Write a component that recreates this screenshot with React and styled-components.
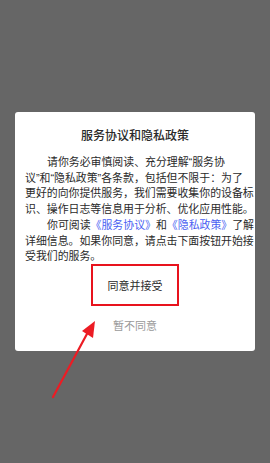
import styled, { createGlobalStyle } from "styled-components";

const GlobalStyle = createGlobalStyle`
    html, body {
        margin: 0;
        padding: 0;
        background: #666666;
    }
    body {
        font-family: "Liberation Sans", "Noto Sans CJK SC", sans-serif;
    }
`;

const Screen = styled.div`
    position: relative;
    width: 270px;
    height: 463px;
    background-color: #666666;
    display: flex;
    align-items: center;
    justify-content: center;
    overflow: hidden;
`;

const Dialog = styled.div`
    width: 240px;
    background-color: #ffffff;
    border-radius: 3px;
    padding: 16px 10px 17px;
    box-sizing: border-box;
    display: flex;
    flex-direction: column;
    align-items: center;
`;

const Title = styled.h1`
    margin: 0;
    font-size: 12px;
    line-height: 16px;
    font-weight: 500;
    color: #2a2a2a;
`;

const Body = styled.div`
    width: 100%;
    margin-top: 11px;
    font-size: 10.9px;
    line-height: 15.7px;
    color: #2a2a2a;
`;

const Para = styled.p`
    margin: 0;
    text-indent: 22px;
    white-space: nowrap;
`;

const Link = styled.span`
    color: #4a5ff2;
`;

const Highlight = styled.div`
    margin-top: -1px;
    border: 2px solid #e8131d;
    box-sizing: border-box;
    width: 88px;
    height: 42px;
    display: flex;
    align-items: center;
    justify-content: center;
`;

const AgreeButton = styled.button`
    border: none;
    background: none;
    padding: 2px 0 0;
    font-family: inherit;
    font-size: 11px;
    line-height: 16px;
    color: #2a2a2a;
`;

const RejectButton = styled.button`
    margin-top: 12px;
    border: none;
    background: none;
    padding: 0;
    font-family: inherit;
    font-size: 11px;
    line-height: 16px;
    color: #9a9a9a;
`;

const Arrow = styled.svg`
    position: absolute;
    left: 0;
    top: 0;
    pointer-events: none;
`;

export default function App() {
    return (
        <>
            <GlobalStyle />
            <Screen>
                <Dialog>
                    <Title>服务协议和隐私政策</Title>
                    <Body>
                        <Para>
                            请你务必审慎阅读、充分理解“服务协<br />
                            议”和“隐私政策”各条款，包括但不限于：为了<br />
                            更好的向你提供服务，我们需要收集你的设备标<br />
                            识、操作日志等信息用于分析、优化应用性能。
                        </Para>
                        <Para>
                            你可阅读<Link>《服务协议》</Link>和<Link>《隐私政策》</Link>了解<br />
                            详细信息。如果你同意，请点击下面按钮开始接<br />
                            受我们的服务。
                        </Para>
                    </Body>
                    <Highlight>
                        <AgreeButton>同意并接受</AgreeButton>
                    </Highlight>
                    <RejectButton>暂不同意</RejectButton>
                </Dialog>
                <Arrow width="270" height="463" viewBox="0 0 270 463">
                    <line x1="53" y1="397" x2="88" y2="332" stroke="#ec1c24" strokeWidth="2.2" strokeLinecap="round" />
                    <polygon points="95,321 82,331 93,338" fill="#ec1c24" />
                </Arrow>
            </Screen>
        </>
    );
}
